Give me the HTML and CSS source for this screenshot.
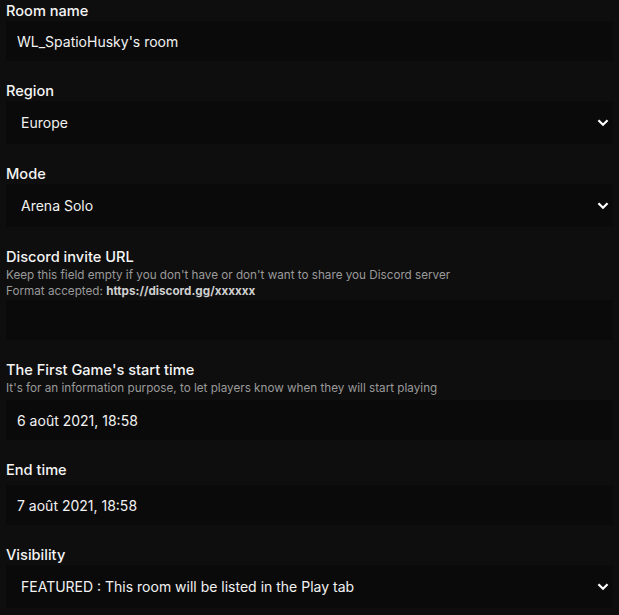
FILE: index.html
```html
<!DOCTYPE html>
<html lang="en">
<head>
<meta charset="utf-8">
<title>Room settings</title>
<link rel="stylesheet" href="styles.css">
</head>
<body>
<form class="form">
  <div class="group">
    <label class="label" for="room-name">Room name</label>
    <input class="input" id="room-name" type="text" value="WL_SpatioHusky's room">
  </div>
  <div class="group">
    <label class="label" for="region">Region</label>
    <div class="select-wrap">
      <select class="select" id="region"><option>Europe</option></select>
      <svg class="chevron" viewBox="0 0 12 8" width="12" height="8"><path d="M2.2 2l3.8 3.8 3.8-3.8" fill="none" stroke="#fff" stroke-width="2.2" stroke-linecap="square"/></svg>
    </div>
  </div>
  <div class="group">
    <label class="label" for="mode">Mode</label>
    <div class="select-wrap">
      <select class="select" id="mode"><option>Arena Solo</option></select>
      <svg class="chevron" viewBox="0 0 12 8" width="12" height="8"><path d="M2.2 2l3.8 3.8 3.8-3.8" fill="none" stroke="#fff" stroke-width="2.2" stroke-linecap="square"/></svg>
    </div>
  </div>
  <div class="group">
    <label class="label" for="discord">Discord invite URL</label>
    <p class="help help-discord">Keep this field empty if you don't have or don't want to share you Discord server<br>Format accepted: <strong class="help-strong">https://discord.gg/xxxxxx</strong></p>
    <input class="input" id="discord" type="text" value="">
  </div>
  <div class="group">
    <label class="label" for="start">The First Game's start time</label>
    <p class="help help-start">It's for an information purpose, to let players know when they will start playing</p>
    <input class="input" id="start" type="text" value="6 août 2021, 18:58">
  </div>
  <div class="group">
    <label class="label label-end" for="end">End time</label>
    <input class="input" id="end" type="text" value="7 août 2021, 18:58">
  </div>
  <div class="group">
    <label class="label" for="visibility">Visibility</label>
    <div class="select-wrap">
      <select class="select" id="visibility"><option>FEATURED : This room will be listed in the Play tab</option></select>
      <svg class="chevron" viewBox="0 0 12 8" width="12" height="8"><path d="M2.2 2l3.8 3.8 3.8-3.8" fill="none" stroke="#fff" stroke-width="2.2" stroke-linecap="square"/></svg>
    </div>
  </div>
</form>
</body>
</html>
```
FILE: styles.css
```css
html, body {
  margin: 0;
  background: #0e0e0e;
}
body {
  padding: 1px 6px 0;
  font-family: Inter, "Noto Sans", sans-serif;
  color: #f2f2f2;
}
.form {
  display: flex;
  flex-direction: column;
  gap: 20px;
}
.group {
  display: flex;
  flex-direction: column;
}
.label {
  display: block;
  font-size: 14.6px;
  font-weight: 500;
  line-height: 20px;
  color: #f5f5f5;
}
.label-end {
  margin-bottom: 5px;
}
.help {
  margin: 0;
  font-size: 11.7px;
  line-height: 16px;
  color: #9a9a9a;
}
.help-discord {
  margin-bottom: 1px;
}
.help-start {
  margin-bottom: 4px;
}
.help-strong {
  font-weight: 700;
  color: #cfcfcf;
}
.input,
.select {
  box-sizing: border-box;
  width: 100%;
  border: 0;
  outline: 0;
  background: #0a0a0a;
  color: #f2f2f2;
  font-family: inherit;
  font-size: 14px;
  margin: 0;
  border-radius: 0;
}
.input {
  height: 40px;
  padding: 0 11px;
}
.select-wrap {
  position: relative;
}
.select {
  -webkit-appearance: none;
  appearance: none;
  height: 43px;
  padding: 0 30px 0 15px;
}
.chevron {
  position: absolute;
  right: 4px;
  top: 18px;
  pointer-events: none;
}
```
